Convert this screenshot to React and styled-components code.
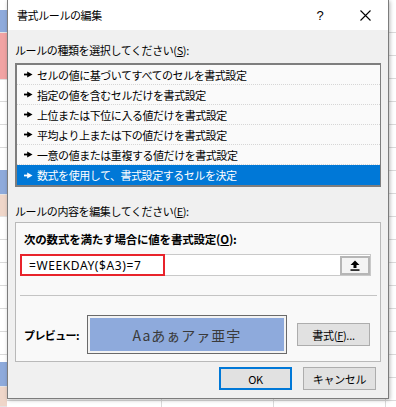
import React from "react";
import styled, { createGlobalStyle } from "styled-components";

const GlobalStyle = createGlobalStyle`
  html, body { margin: 0; padding: 0; }
  body {
    font-family: "Noto Sans CJK JP", "Noto Sans", sans-serif;
    font-size: 11px;
    color: #000;
  }
`;

const JP = `"Noto Sans CJK JP", "Noto Sans", sans-serif`;

const Sheet = styled.div`
  width: 396px;
  height: 407px;
  overflow: hidden;
  display: flex;
  background-color: #fff;
  background-image:
    repeating-linear-gradient(to bottom, transparent 0 22px, #dadada 22px 23px),
    repeating-linear-gradient(to right, transparent 0 111px, #dadada 111px 112px);
  background-position: 0 10px, 50px 0;
`;

const Strip = styled.div`
  width: 7px;
  flex: none;
  display: flex;
  flex-direction: column;
`;

const StripCell = styled.div`
  flex: none;
  height: ${(p) => p.$h}px;
  background: ${(p) => p.$c || "transparent"};
  border-bottom: ${(p) => (p.$c ? "1px solid #e4e4e4" : "none")};
  box-sizing: border-box;
`;

const Dialog = styled.div`
  width: 382px;
  height: 399px;
  flex: none;
  box-sizing: border-box;
  border: 1px solid #7c7c7c;
  border-top: none;
  background: #f0f0f0;
  box-shadow: 1px 1px 4px rgba(0, 0, 0, 0.28);
  display: flex;
  flex-direction: column;
`;

const TitleBar = styled.div`
  height: 30px;
  background: #fff;
  display: flex;
  align-items: center;
  padding-left: 9px;
  flex: none;
`;

const Title = styled.div`
  flex: 1;
  font-family: ${JP};
  font-size: 11px;
  letter-spacing: -0.4px;
  line-height: 30px;
`;

const CaptionButton = styled.div`
  width: ${(p) => p.$w}px;
  height: 30px;
  display: flex;
  align-items: center;
  justify-content: center;
  font-family: "Liberation Sans", sans-serif;
  font-size: 13px;
`;

const Body = styled.div`
  flex: 1;
  display: flex;
  flex-direction: column;
  padding: 0 6px 0 7px;
`;

const Label = styled.div`
  font-family: ${JP};
  font-size: 11px;
  letter-spacing: -0.4px;
  line-height: 16px;
  margin-top: ${(p) => p.$mt}px;
  u { text-decoration: underline; }
`;

const ListBox = styled.div`
  margin-top: 5px;
  width: 366px;
  height: 124px;
  box-sizing: border-box;
  border: 2px solid #7e7e7e;
  border-right-width: 1px;
  background: #fafafa;
  display: flex;
  flex-direction: column;
`;

const ListItem = styled.div`
  height: 20px;
  box-sizing: border-box;
  display: flex;
  align-items: center;
  gap: 4px;
  padding-left: 7px;
  font-family: ${JP};
  font-size: 11px;
  letter-spacing: -0.45px;
  color: ${(p) => (p.$sel ? "#fff" : "#000")};
  background: ${(p) => (p.$sel ? "#0078d7" : "transparent")};
  border-bottom: ${(p) => (p.$last ? "none" : "1px dotted #d6d6d6")};
`;

const GroupBox = styled.div`
  margin-top: 3px;
  width: 366px;
  height: 140px;
  box-sizing: border-box;
  border: 1px solid #b9b9b9;
  background: #f9f9f9;
  display: flex;
  flex-direction: column;
  padding: 8px 9px 0 5px;
`;

const BoldLabel = styled.div`
  font-family: ${JP};
  font-weight: bold;
  font-size: 11.5px;
  line-height: 16px;
  margin-left: 3px;
  letter-spacing: -0.2px;
  u { text-decoration: underline; }
`;

const FormulaField = styled.div`
  position: relative;
  margin-top: 7px;
  height: 22px;
  box-sizing: border-box;
  border: 1px solid #c9c9c9;
  background: #fff;
  display: flex;
  align-items: center;
  justify-content: space-between;
  padding-left: 7px;
`;

const FormulaText = styled.span`
  font-family: "Noto Sans", sans-serif;
  font-size: 12px;
  letter-spacing: 0.6px;
`;

const Highlight = styled.div`
  position: absolute;
  left: -2px;
  top: -1px;
  width: 145px;
  height: 22px;
  box-sizing: border-box;
  border: 2px solid #e8232b;
  pointer-events: none;
`;

const PickButton = styled.div`
  width: 30px;
  height: 19px;
  box-sizing: border-box;
  border: 2px solid #b6b6b6;
  background: #f4f4f4;
  display: flex;
  align-items: center;
  justify-content: center;
`;

const Divider = styled.div`
  height: 1px;
  background: #c4c4c4;
  margin: 19px -6px 0 -1px;
`;

const PreviewRow = styled.div`
  display: flex;
  align-items: center;
  margin-top: 19px;
  padding-left: 3px;
`;

const PreviewLabel = styled.div`
  width: 63px;
  flex: none;
  font-family: ${JP};
  font-weight: bold;
  font-size: 11px;
  letter-spacing: -0.6px;
`;

const PreviewBox = styled.div`
  width: 200px;
  height: 39px;
  box-sizing: border-box;
  border: 1px solid #6a6a6a;
  padding: 2px;
  background: #f3f3f3;
  flex: none;
`;

const PreviewFill = styled.div`
  height: 100%;
  background: #8eaadc;
  display: flex;
  align-items: center;
  justify-content: center;
  font-family: ${JP};
  font-size: 14px;
  letter-spacing: 1px;
  color: #3a3a3a;
`;

const Button = styled.div`
  width: 73px;
  height: 23px;
  box-sizing: border-box;
  border: ${(p) => (p.$default ? "2px solid #0078d7" : "1px solid #adadad")};
  background: #e1e1e1;
  display: flex;
  align-items: center;
  justify-content: center;
  font-family: ${JP};
  font-size: 11px;
  letter-spacing: -0.3px;
  flex: none;
  u { text-decoration: underline; }
`;

const FormatButton = styled(Button)`
  margin-left: 10px;
`;

const Footer = styled.div`
  display: flex;
  justify-content: flex-end;
  gap: 11px;
  margin-top: 5px;
  padding-right: 6px;
`;

const Arrow = ({ color }) => (
  <svg width="9" height="7" viewBox="0 0 9 7">
    <path d="M0 2.6h4v1.8H0z" fill={color} />
    <path d="M3.2 0.6 L8.5 3.5 L3.2 6.4z" fill={color} />
  </svg>
);

const UploadIcon = () => (
  <svg width="10" height="11" viewBox="0 0 10 11">
    <path d="M5 0.5 L9.5 5 H6.5 V8 H3.5 V5 H0.5z" fill="#000" />
    <path d="M0.5 9.3h9v1.5h-9z" fill="#000" />
  </svg>
);

const CloseIcon = () => (
  <svg width="11" height="11" viewBox="0 0 11 11">
    <path d="M0.5 0.5 L10.5 10.5 M10.5 0.5 L0.5 10.5" stroke="#000" strokeWidth="1.1" />
  </svg>
);

const stripCells = [
  { h: 10 },
  { h: 23, c: "#8eaadb" },
  { h: 47, c: "#f1a3a3" },
  { h: 90 },
  { h: 25, c: "#8eaadb" },
  { h: 22, c: "#efd6c9" },
  { h: 145 },
  { h: 25, c: "#8eaadb" },
  { h: 20, c: "#efd6c9" },
];

const rules = [
  "セルの値に基づいてすべてのセルを書式設定",
  "指定の値を含むセルだけを書式設定",
  "上位または下位に入る値だけを書式設定",
  "平均より上または下の値だけを書式設定",
  "一意の値または重複する値だけを書式設定",
  "数式を使用して、書式設定するセルを決定",
];

export default function App() {
  return (
    <>
      <GlobalStyle />
      <Sheet>
        <Strip>
          {stripCells.map((s, i) => (
            <StripCell key={i} $h={s.h} $c={s.c} />
          ))}
        </Strip>
        <Dialog>
          <TitleBar>
            <Title>書式ルールの編集</Title>
            <CaptionButton $w={44}>?</CaptionButton>
            <CaptionButton $w={46}>
              <CloseIcon />
            </CaptionButton>
          </TitleBar>
          <Body>
            <Label $mt={12}>
              ルールの種類を選択してください(<u>S</u>):
            </Label>
            <ListBox>
              {rules.map((r, i) => {
                const sel = i === rules.length - 1;
                return (
                  <ListItem key={r} $sel={sel} $last={sel}>
                    <Arrow color={sel ? "#fff" : "#000"} />
                    {r}
                  </ListItem>
                );
              })}
            </ListBox>
            <Label $mt={16}>
              ルールの内容を編集してください(<u>E</u>):
            </Label>
            <GroupBox>
              <BoldLabel>
                次の数式を満たす場合に値を書式設定(<u>O</u>):
              </BoldLabel>
              <FormulaField>
                <FormulaText>=WEEKDAY($A3)=7</FormulaText>
                <PickButton>
                  <UploadIcon />
                </PickButton>
                <Highlight />
              </FormulaField>
              <Divider />
              <PreviewRow>
                <PreviewLabel>プレビュー:</PreviewLabel>
                <PreviewBox>
                  <PreviewFill>Aaあぁアァ亜宇</PreviewFill>
                </PreviewBox>
                <FormatButton>
                  書式(<u>F</u>)...
                </FormatButton>
              </PreviewRow>
            </GroupBox>
            <Footer>
              <Button $default>OK</Button>
              <Button>キャンセル</Button>
            </Footer>
          </Body>
        </Dialog>
      </Sheet>
    </>
  );
}
